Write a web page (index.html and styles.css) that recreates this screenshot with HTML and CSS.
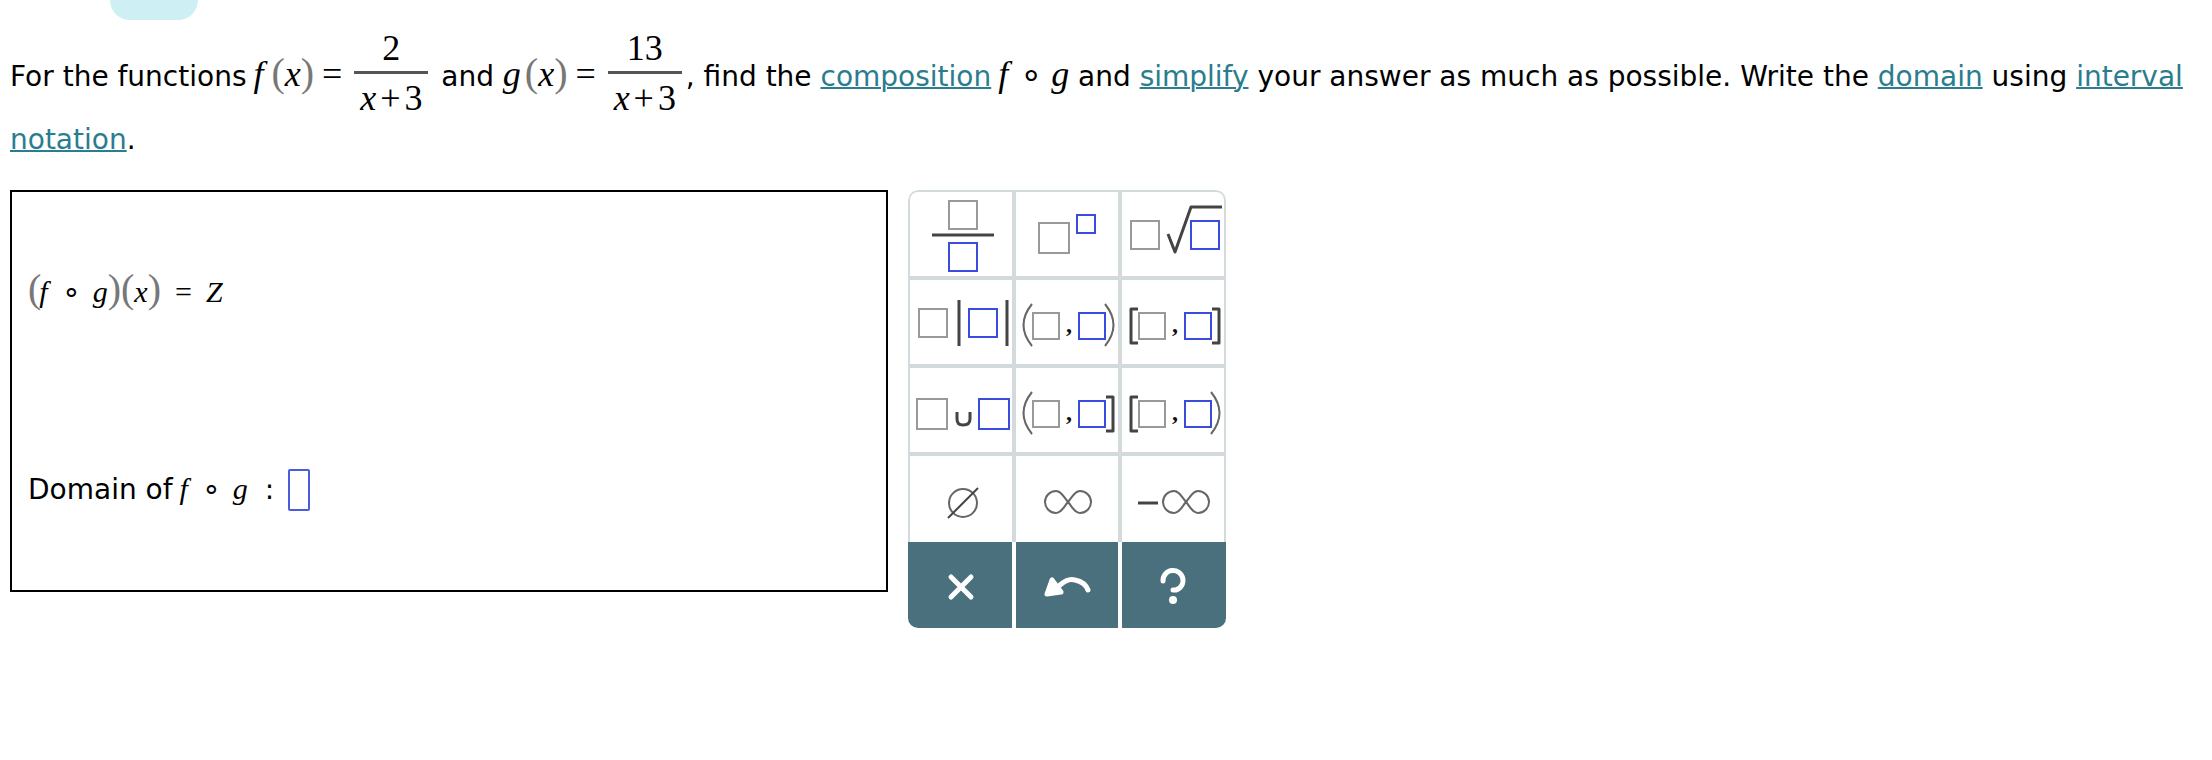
FILE: index.html
```html
<!DOCTYPE html>
<html lang="en">
<head>
  <meta charset="UTF-8">
  <title>Composition of two rational functions</title>
  <link rel="stylesheet" href="styles.css">
</head>
<body>
  <div class="top-tab"></div>

  <main>
    <p class="question">
      For the functions
      <span class="math"><i class="fn">f</i><span class="paren">(</span><i>x</i><span class="paren">)</span><span class="equals">=</span><span class="fraction"><span class="numerator">2</span><span class="denominator"><i>x</i><span class="plus">+</span>3</span></span></span>
      and
      <span class="math"><i class="arg">g</i><span class="paren">(</span><i>x</i><span class="paren">)</span><span class="equals">=</span><span class="fraction"><span class="numerator">13</span><span class="denominator"><i>x</i><span class="plus">+</span>3</span></span></span>, find the <a href="#">composition</a>
      <span class="math"><i class="fn">f</i><span class="compose">∘</span><i>g</i></span>
      and <a href="#">simplify</a> your answer as much as possible. Write the <a href="#">domain</a> using <a href="#"><span>interval</span> <span>notation</span></a>.
    </p>

    <div class="workspace">
      <section class="answer-box">
        <div class="answer-row">
          <span class="math small"><span class="paren">(</span><i class="fn">f</i><span class="compose">∘</span><i>g</i><span class="paren">)</span><span class="paren">(</span><i>x</i><span class="paren">)</span><span class="equals">=</span><i>Z</i></span>
        </div>
        <div class="answer-row">
          <label for="domain">Domain of <span class="math small"><i class="fn">f</i><span class="compose">∘</span><i>g</i></span> <span class="colon">:</span></label>
          <input type="text" id="domain" class="domain-input">
        </div>
      </section>

      <div class="keypad">
        <div class="keys">
          <button aria-label="Fraction">
            <svg viewBox="0 0 102 84"><rect class="slot" x="39" y="9" width="28" height="28"/><path class="ink" d="M22 43H84"/><rect class="slot active" x="39" y="51" width="28" height="28"/></svg>
          </button>
          <button aria-label="Exponent">
            <svg viewBox="0 0 102 84"><rect class="slot" x="23" y="31" width="30" height="30"/><rect class="slot active" x="61" y="23" width="18" height="18"/></svg>
          </button>
          <button aria-label="Square root">
            <svg viewBox="0 0 102 84"><rect class="slot" x="9" y="29" width="28" height="28"/><path class="ink" d="M46 42L53 60L69 15H100"/><rect class="slot active" x="69" y="29" width="28" height="28"/></svg>
          </button>

          <button aria-label="Absolute value">
            <svg viewBox="0 0 102 84"><rect class="slot" x="9" y="29" width="28" height="28"/><path class="ink" d="M49 20V66M97 20V66"/><rect class="slot active" x="59" y="29" width="28" height="28"/></svg>
          </button>
          <button aria-label="Open interval">
            <svg viewBox="0 0 102 84"><path class="curve" d="M16 24Q-1 45 16 66M89 24Q106 45 89 66"/><rect class="slot" x="17" y="33" width="26" height="26"/><text x="50" y="52">,</text><rect class="slot active" x="63" y="33" width="26" height="26"/></svg>
          </button>
          <button aria-label="Closed interval">
            <svg viewBox="0 0 102 84"><path class="ink" d="M16 29H9V63H16M90 29H97V63H90"/><rect class="slot" x="17" y="33" width="26" height="26"/><text x="50" y="52">,</text><rect class="slot active" x="63" y="33" width="26" height="26"/></svg>
          </button>

          <button aria-label="Union">
            <svg viewBox="0 0 102 84"><rect class="slot" x="7" y="31" width="30" height="30"/><path class="ink" d="M47 44V51Q47 57 53 57Q60 57 60 51V44"/><rect class="slot active" x="69" y="31" width="30" height="30"/></svg>
          </button>
          <button aria-label="Left-open interval">
            <svg viewBox="0 0 102 84"><path class="curve" d="M16 24Q-1 45 16 66"/><path class="ink" d="M90 29H97V63H90"/><rect class="slot" x="17" y="33" width="26" height="26"/><text x="50" y="52">,</text><rect class="slot active" x="63" y="33" width="26" height="26"/></svg>
          </button>
          <button aria-label="Right-open interval">
            <svg viewBox="0 0 102 84"><path class="ink" d="M16 29H9V63H16"/><path class="curve" d="M89 24Q106 45 89 66"/><rect class="slot" x="17" y="33" width="26" height="26"/><text x="50" y="52">,</text><rect class="slot active" x="63" y="33" width="26" height="26"/></svg>
          </button>

          <button aria-label="Empty set">
            <svg viewBox="0 0 102 86"><circle class="curve" cx="53" cy="47" r="14"/><path class="thin" d="M38 62L68 32"/></svg>
          </button>
          <button aria-label="Infinity">
            <svg viewBox="0 0 102 86"><path class="curve" d="M52 46C47 40 45 35 40 35A11 11 0 0 0 40 57C45 57 47 52 52 46C57 40 59 35 64 35A11 11 0 0 1 64 57C59 57 57 52 52 46Z"/></svg>
          </button>
          <button aria-label="Negative infinity">
            <svg viewBox="0 0 102 86"><path class="ink" d="M16 47H36"/><path class="curve" d="M64 46C59 40 57 35 52 35A11 11 0 0 0 52 57C57 57 59 52 64 46C69 40 71 35 76 35A11 11 0 0 1 76 57C71 57 69 52 64 46Z"/></svg>
          </button>
        </div>

        <div class="actions">
          <button aria-label="Clear">
            <svg viewBox="0 0 104 86"><path d="M43 35L63 55M63 35L43 55"/></svg>
          </button>
          <button aria-label="Undo">
            <svg viewBox="0 0 102 86"><path d="M44 43Q52 36 59 38Q69 40 72 48"/><path class="arrow-head" d="M36 38L31 52L45 50Z"/></svg>
          </button>
          <button aria-label="Help">
            <svg viewBox="0 0 104 86"><path d="M41 39A10 10 0 1 1 54 48L51 48"/><circle cx="51" cy="58" r="4"/></svg>
          </button>
        </div>
      </div>
    </div>
  </main>
</body>
</html>
```
FILE: styles.css
```css
* {
  margin: 0;
  padding: 0;
  box-sizing: border-box;
}

body {
  font-family: Verdana, 'DejaVu Sans', sans-serif;
  font-size: 28px;
  line-height: 48px;
  color: #000;
  background-color: #fff;
}

.top-tab {
  width: 88px;
  height: 20px;
  margin-left: 110px;
  background-color: #ceeff3;
  border-radius: 0 0 20px 20px;
}

main {
  padding: 10px;
}

.question {
  margin-bottom: 26px;
}

a {
  color: #2a7d8e;
  text-decoration: underline;
  text-decoration-thickness: 2px;
}

/* math */
.math {
  font-family: 'Liberation Serif', serif;
  font-size: 36px;
  line-height: 36px;
  white-space: nowrap;
}

.math.small {
  font-size: 30px;
}

.fn {
  margin-left: -2px;
  margin-right: 8px;
}

.small .fn {
  margin-right: 2px;
}

.arg {
  margin-right: 4px;
}

.paren {
  font-size: 40px;
  color: #777;
}

.equals {
  margin: 0 12px 0 8px;
}

.small .equals {
  margin: 0 14px;
}

.compose {
  margin: 0 8px 0 4px;
}

.small .compose {
  margin: 0 12px;
}

.plus {
  margin: 0 4px;
}

.fraction {
  display: inline-flex;
  flex-direction: column;
  min-width: 74px;
  margin-right: 4px;
  text-align: center;
  vertical-align: 26px;
}

.numerator {
  padding-bottom: 5px;
  border-bottom: 3px solid #555;
}

.denominator {
  padding-top: 6px;
}

/* answer area and keypad */
.workspace {
  display: flex;
  align-items: flex-start;
  gap: 20px;
}

.answer-box {
  display: flex;
  flex: 0 1 878px;
  flex-direction: column;
  gap: 156px;
  padding: 79px 16px 76px;
  border: 2px solid #000;
}

.answer-row {
  display: flex;
  align-items: center;
}

.colon {
  margin: 0 14px 0 8px;
}

.domain-input {
  width: 22px;
  height: 42px;
  border: 2px solid #4a5bdc;
  border-radius: 2px;
  font-size: 28px;
}

.keypad {
  flex: 0 0 318px;
  overflow: hidden;
  border-radius: 10px;
}

.keys {
  display: grid;
  grid-template-columns: repeat(3, 1fr);
  gap: 4px;
  border: 2px solid #d2dadd;
  border-bottom: 0;
  border-radius: 10px 10px 0 0;
  background-color: #d2dadd;
  overflow: hidden;
}

.keypad button {
  display: block;
  border: 0;
  background-color: #fff;
  cursor: pointer;
}

.keypad svg {
  display: block;
  width: 100%;
  fill: none;
}

.slot {
  stroke: #999;
  stroke-width: 2;
}

.slot.active {
  stroke: #3a4be0;
}

.ink {
  stroke: #444;
  stroke-width: 3;
  stroke-linejoin: round;
}

.curve {
  stroke: #666;
  stroke-width: 2;
}

.thin {
  stroke: #444;
  stroke-width: 2;
}

.keys text {
  font-family: 'Liberation Serif', serif;
  font-size: 24px;
  font-weight: bold;
  fill: #111;
}

.actions {
  display: grid;
  grid-template-columns: 104px 1fr 104px;
  gap: 4px;
}

.actions button {
  background-color: #49707c;
}

.actions path {
  stroke: #fff;
  stroke-width: 5;
  stroke-linecap: round;
  stroke-linejoin: round;
}

.actions circle,
.actions .arrow-head {
  fill: #fff;
}
```
